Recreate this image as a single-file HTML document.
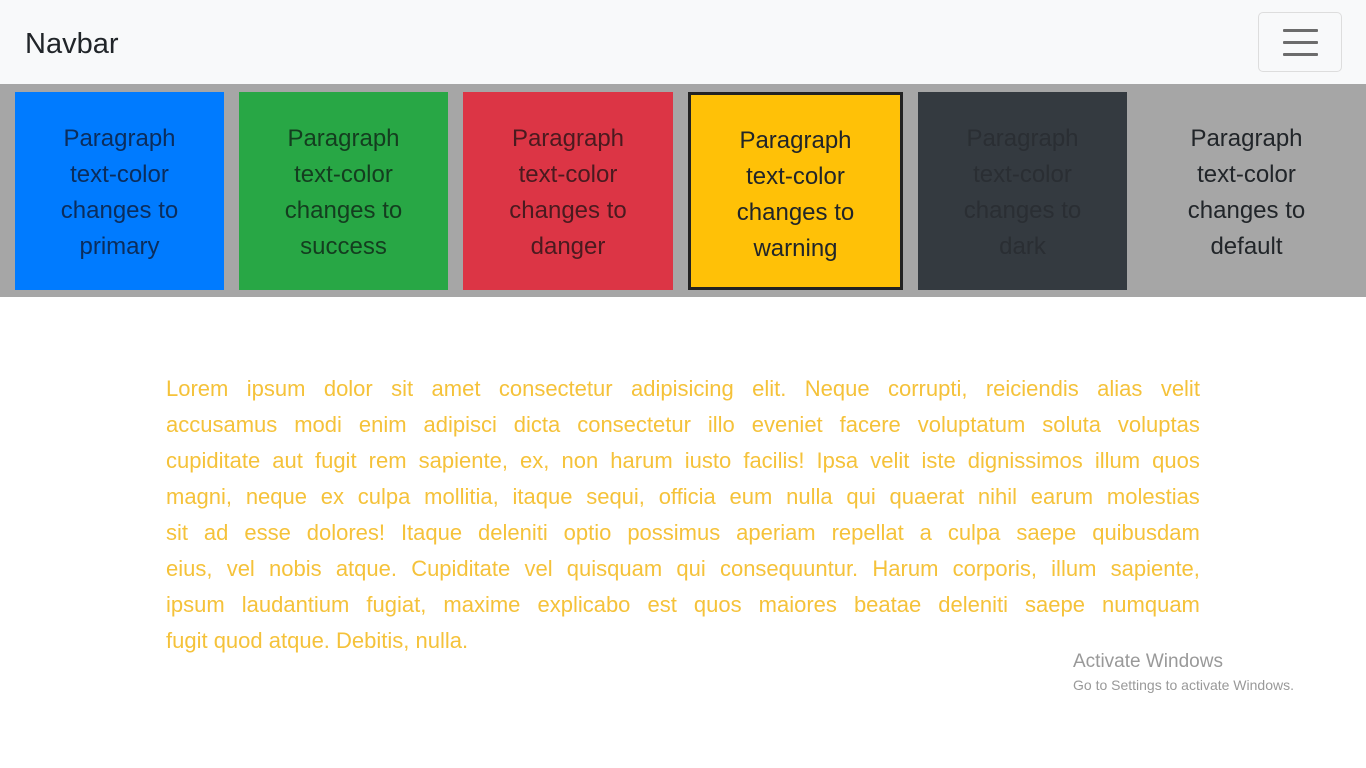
<!DOCTYPE html>
<html><head><style>
body{margin:0;width:1366px;height:768px;background:#fff;font-family:"Liberation Sans",sans-serif;overflow:hidden;position:relative}
.nav{height:84px;background:#f8f9fa;position:relative}
.brand{position:absolute;left:25px;top:27px;font-size:29px;color:#212529;line-height:34px}
.tog{position:absolute;left:1258px;top:12px;width:84px;height:60px;border:1px solid #ddd;border-radius:5px;box-sizing:border-box}
.tog i{position:absolute;left:24px;width:35px;height:3px;background:#6c6c6c;border-radius:1px}
.strip{position:absolute;top:84px;left:0;width:1366px;height:213px;background:#a6a6a6}
.b{position:absolute;top:92px;height:198px;width:209px;box-sizing:border-box;display:flex;align-items:center;justify-content:center;text-align:center;font-size:24px;line-height:36px;color:#212529;padding-top:3px}
.p{position:absolute;left:166px;top:371px;width:1034px;color:#f5c23a;font-size:22px;line-height:36px}
.p div{white-space:nowrap;display:flex;justify-content:space-between}
.p div.l{justify-content:flex-start}
.aw{position:absolute;left:1073px;top:651px;color:#999;font-size:19px}
.aw2{position:absolute;left:1073px;top:677px;color:#999;font-size:14px}
</style></head><body>
<div class="nav"><div class="brand">Navbar</div>
<div class="tog"><i style="top:16px"></i><i style="top:28px"></i><i style="top:40px"></i></div></div>
<div class="strip"></div>
<div class="b" style="left:15px;background:#007bff;color:#0b2d5c">Paragraph<br>text-color<br>changes to<br>primary</div>
<div class="b" style="left:239px;background:#28a745;color:#143d1f">Paragraph<br>text-color<br>changes to<br>success</div>
<div class="b" style="left:463px;width:210px;background:#dc3545;color:#4a1a1f">Paragraph<br>text-color<br>changes to<br>danger</div>
<div class="b" style="left:688px;width:215px;background:#ffc107;border:3px solid #222;padding-top:8px">Paragraph<br>text-color<br>changes to<br>warning</div>
<div class="b" style="left:918px;background:#343a40;color:#2a2e33">Paragraph<br>text-color<br>changes to<br>dark</div>
<div class="b" style="left:1142px;color:#212529">Paragraph<br>text-color<br>changes to<br>default</div>
<div class="p">
<div><span>Lorem</span><span>ipsum</span><span>dolor</span><span>sit</span><span>amet</span><span>consectetur</span><span>adipisicing</span><span>elit.</span><span>Neque</span><span>corrupti,</span><span>reiciendis</span><span>alias</span><span>velit</span></div>
<div><span>accusamus</span><span>modi</span><span>enim</span><span>adipisci</span><span>dicta</span><span>consectetur</span><span>illo</span><span>eveniet</span><span>facere</span><span>voluptatum</span><span>soluta</span><span>voluptas</span></div>
<div><span>cupiditate</span><span>aut</span><span>fugit</span><span>rem</span><span>sapiente,</span><span>ex,</span><span>non</span><span>harum</span><span>iusto</span><span>facilis!</span><span>Ipsa</span><span>velit</span><span>iste</span><span>dignissimos</span><span>illum</span><span>quos</span></div>
<div><span>magni,</span><span>neque</span><span>ex</span><span>culpa</span><span>mollitia,</span><span>itaque</span><span>sequi,</span><span>officia</span><span>eum</span><span>nulla</span><span>qui</span><span>quaerat</span><span>nihil</span><span>earum</span><span>molestias</span></div>
<div><span>sit</span><span>ad</span><span>esse</span><span>dolores!</span><span>Itaque</span><span>deleniti</span><span>optio</span><span>possimus</span><span>aperiam</span><span>repellat</span><span>a</span><span>culpa</span><span>saepe</span><span>quibusdam</span></div>
<div><span>eius,</span><span>vel</span><span>nobis</span><span>atque.</span><span>Cupiditate</span><span>vel</span><span>quisquam</span><span>qui</span><span>consequuntur.</span><span>Harum</span><span>corporis,</span><span>illum</span><span>sapiente,</span></div>
<div><span>ipsum</span><span>laudantium</span><span>fugiat,</span><span>maxime</span><span>explicabo</span><span>est</span><span>quos</span><span>maiores</span><span>beatae</span><span>deleniti</span><span>saepe</span><span>numquam</span></div>
<div class="l"><span>fugit quod atque. Debitis, nulla.</span></div>
</div>
<div class="aw">Activate Windows</div>
<div class="aw2">Go to Settings to activate Windows.</div>
</body></html>
